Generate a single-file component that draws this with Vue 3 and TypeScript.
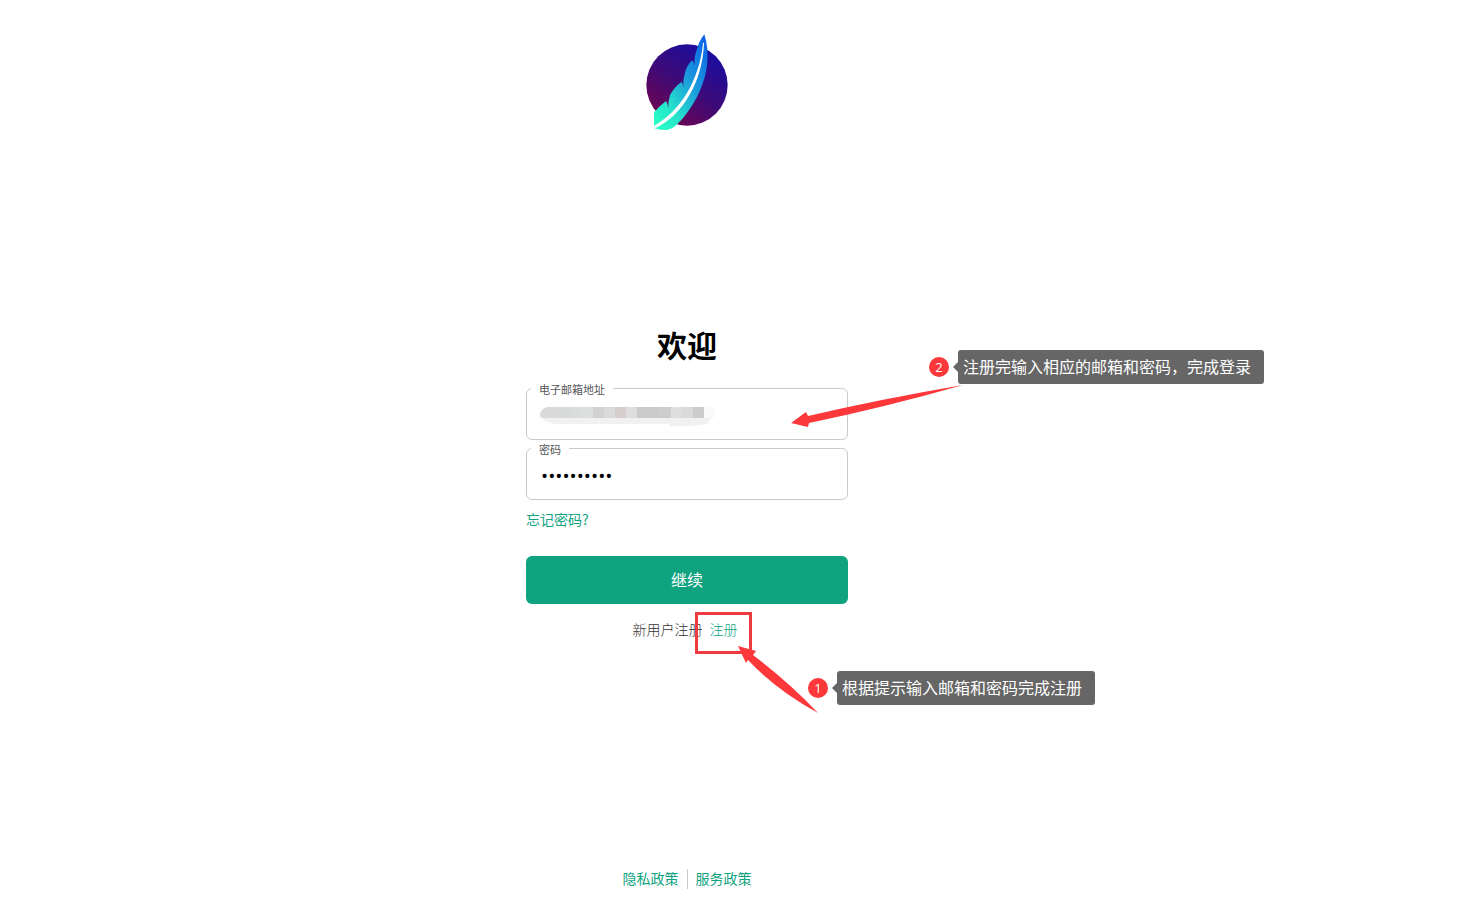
<script setup lang="ts">
import { ref } from 'vue'

const email = ref('')
const password = ref('0123456789')

interface Tile { x: number; y: number; w: number; h: number; fill: string }

const tiles: Tile[] = [
  { x: 8, y: 0, w: 12, h: 11, fill: '#dadada' },
  { x: 20, y: 0, w: 11, h: 11, fill: '#d9dbdb' },
  { x: 31, y: 0, w: 11, h: 11, fill: '#dbdddd' },
  { x: 42, y: 0, w: 12, h: 11, fill: '#dddfdf' },
  { x: 54, y: 0, w: 11, h: 11, fill: '#d2d2d2' },
  { x: 65, y: 0, w: 11, h: 11, fill: '#dadada' },
  { x: 76, y: 0, w: 11, h: 11, fill: '#d5cdce' },
  { x: 87, y: 0, w: 11, h: 11, fill: '#dedede' },
  { x: 98, y: 0, w: 22, h: 11, fill: '#cacaca' },
  { x: 120, y: 0, w: 12, h: 11, fill: '#cdcdcd' },
  { x: 132, y: 0, w: 11, h: 11, fill: '#dfdfdf' },
  { x: 143, y: 0, w: 11, h: 11, fill: '#dadada' },
  { x: 154, y: 0, w: 11, h: 11, fill: '#cccccc' },
  { x: 165, y: 0, w: 11, h: 11, fill: '#fafafa' },
]
</script>

<template>
  <main class="page">
    <header class="brand">
      <svg class="logo" viewBox="-3 0 312 345" role="img" aria-label="Logo">
        <defs>
          <linearGradient id="disc" x1="0.2" y1="0.9" x2="0.75" y2="0.1">
            <stop offset="0" stop-color="#6c0452" />
            <stop offset="0.5" stop-color="#3d0a78" />
            <stop offset="1" stop-color="#1c0d9c" />
          </linearGradient>
          <linearGradient id="feather" x1="0.1" y1="1" x2="0.85" y2="0">
            <stop offset="0" stop-color="#2affc6" />
            <stop offset="0.25" stop-color="#25e2cb" />
            <stop offset="0.6" stop-color="#1b9bdc" />
            <stop offset="1" stop-color="#0a66e6" />
          </linearGradient>
        </defs>
        <circle cx="153" cy="180" r="122" fill="url(#disc)" />
        <path
          fill="url(#feather)"
          d="M205 28C214 55 216 85 214 112C211 165 181 232 143 277C126 297 112 311 96 314C80 317 66 313 54 309V262Q70 243 90 228Q96 237 97 249Q96 230 102 210Q115 186 137 170Q142 177 142 188Q140 165 147 143Q153 121 168 106Q175 111 176 122Q173 101 181 79Q188 49 205 28Z"
        />
        <path fill="#fff" d="M54 309V303C130 260 189 172 201 55Q203 50 204 56C199 170 142 268 58 310Z" />
      </svg>
    </header>

    <section class="login">
      <h1>欢迎</h1>
      <form class="form" @submit.prevent>
        <div class="field">
          <label for="email">电子邮箱地址</label>
          <input id="email" v-model="email" type="email" />
          <svg class="mosaic" viewBox="0 0 180 20" aria-hidden="true">
            <path d="M12 0H8Q2 2 1 7Q1 11 3 11H12Z" fill="#dadada" />
            <path d="M3 11H172L168 17Q150 20 130 19L130 17H18Q6 16 3 11Z" fill="#f1f1f1" />
            <rect v-for="t in tiles" :key="t.x" :x="t.x" :y="t.y" :width="t.w" :height="t.h" :fill="t.fill" />
          </svg>
        </div>
        <div class="field">
          <label for="password">密码</label>
          <input id="password" v-model="password" type="password" />
        </div>
        <a class="forgot" href="#">忘记密码?</a>
        <button type="submit">继续</button>
        <p class="signup">新用户注册 <a href="#">注册</a></p>
      </form>

      <div class="highlight"></div>
      <svg class="arrow arrow-login" viewBox="0 0 172 46" aria-hidden="true">
        <path d="M0 38L15 27L17 31Q90 14 172 0Q95 22 18 38L17 42Z" />
      </svg>
      <svg class="arrow arrow-signup" viewBox="0 0 82 68" aria-hidden="true">
        <path d="M0 0L18 5L15 9Q52 37 80 67Q38 44 10 14L8 17Z" />
      </svg>
      <div class="note note-login"><span class="badge">2</span><span class="tip">注册完输入相应的邮箱和密码，完成登录</span></div>
      <div class="note note-signup"><span class="badge">1</span><span class="tip">根据提示输入邮箱和密码完成注册</span></div>
    </section>

    <footer class="footer">
      <a href="#">隐私政策</a>
      <a href="#">服务政策</a>
    </footer>
  </main>
</template>

<style>
body {
  margin: 0;
  background: #fff;
}
</style>

<style scoped>
.page {
  box-sizing: border-box;
  min-height: 100vh;
  padding: 25px 89px 10px 0;
  display: flex;
  flex-direction: column;
  align-items: center;
  font-family: "Noto Sans CJK SC", "Liberation Sans", sans-serif;
  color: #000;
}
.logo {
  display: block;
  width: 104px;
  height: 115px;
}
.login {
  position: relative;
  width: 322px;
  margin-top: 184px;
}
h1 {
  margin: 0 0 24px;
  font-size: 30px;
  line-height: 40px;
  font-weight: 700;
  text-align: center;
}
.form {
  display: flex;
  flex-direction: column;
}
.field {
  position: relative;
  height: 52px;
  margin-bottom: 8px;
}
.field input {
  box-sizing: border-box;
  width: 100%;
  height: 100%;
  padding: 4px 14px 0;
  border: 1px solid #c8cacc;
  border-radius: 6px;
  background: #fff;
  font-family: "Noto Sans CJK SC", sans-serif;
  font-size: 16px;
  color: #000;
  outline: none;
}
.field input[type="password"] {
  font-family: "Open Sans", sans-serif;
  font-size: 19px;
}
.field label {
  position: absolute;
  top: -7px;
  left: 5px;
  padding: 0 8px;
  background: #fff;
  font-size: 11px;
  line-height: 16px;
  color: #555;
}
.mosaic {
  position: absolute;
  top: 19px;
  left: 13px;
  width: 180px;
  height: 20px;
}
a {
  color: #10a37f;
  text-decoration: none;
}
.forgot {
  align-self: flex-start;
  margin-top: 1px;
  font-size: 14px;
  line-height: 20px;
}
button {
  height: 48px;
  margin-top: 27px;
  padding: 0 0 3px;
  border: 0;
  border-radius: 6px;
  background: #10a37f;
  color: #fff;
  font-family: inherit;
  font-size: 16px;
}
.signup {
  margin: 15px 0 0;
  font-size: 14px;
  line-height: 20px;
  font-weight: 300;
  text-align: center;
  color: #333;
}
.signup a {
  margin: 0 4px;
}
.highlight {
  box-sizing: border-box;
  position: absolute;
  top: 288px;
  left: 169px;
  width: 57px;
  height: 42px;
  border: 3px solid #ee3b41;
}
.arrow {
  position: absolute;
  fill: #fc383b;
}
.arrow-login {
  top: 61px;
  left: 265px;
  width: 172px;
  height: 46px;
}
.arrow-signup {
  top: 322px;
  left: 212px;
  width: 82px;
  height: 68px;
}
.note {
  position: absolute;
  display: flex;
  align-items: center;
  gap: 9px;
  white-space: nowrap;
}
.note-login {
  top: 26px;
  left: 403px;
}
.note-signup {
  top: 347px;
  left: 282px;
}
.badge {
  width: 20px;
  height: 20px;
  border-radius: 50%;
  background: #fc383b;
  color: #fff;
  font-family: "Open Sans", sans-serif;
  font-size: 13px;
  line-height: 20px;
  text-align: center;
}
.tip {
  position: relative;
  padding: 0 13px 2px 5px;
  border-radius: 3px;
  background: #666;
  color: #fff;
  font-size: 16px;
  line-height: 32px;
}
.tip::before {
  content: "";
  position: absolute;
  top: 12px;
  left: -5px;
  border: 5px solid transparent;
  border-left: 0;
  border-right-color: #666;
}
.footer {
  display: flex;
  margin-top: auto;
  font-size: 14px;
  line-height: 18px;
}
.footer a {
  padding: 0 8px 2px;
}
.footer a + a {
  border-left: 1px solid #c8cacc;
}
</style>
